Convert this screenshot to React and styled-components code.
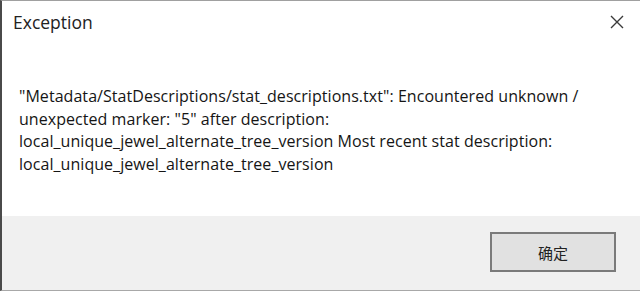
import React from "react";
import styled, { createGlobalStyle } from "styled-components";

const GlobalStyle = createGlobalStyle`
  html, body {
    margin: 0;
    padding: 0;
    background: #ffffff;
  }
`;

// janela do diálogo
const Dialog = styled.div`
  width: 640px;
  height: 291px;
  box-sizing: border-box;
  display: flex;
  flex-direction: column;
  background: #fff;
  border-top: 1px solid #a0a0a0;
  border-left: 2px solid #4a4a4a;
  border-bottom: 1px solid #a8a8a8;
  font-family: "Open Sans", "Noto Sans CJK SC", sans-serif;
  color: #1a1a1a;
`;

const TitleBar = styled.div`
  height: 41px;
  display: flex;
  align-items: center;
  justify-content: space-between;
  padding-left: 11px;
`;

const Title = styled.span`
  font-size: 17.5px;
  color: #222;
`;

const CloseButton = styled.div`
  width: 46px;
  height: 41px;
  display: flex;
  align-items: center;
  justify-content: center;
  color: #333;
`;

const Body = styled.div`
  flex: 1;
  padding: 43px 20px 0 17px;
`;

const Message = styled.p`
  margin: 0;
  font-size: 16px;
  line-height: 22.5px;
  color: #151515;
  white-space: nowrap;
  letter-spacing: 0.05px;
`;

const Footer = styled.div`
  height: 74px;
  background: #f0f0f0;
  display: flex;
  justify-content: flex-end;
  align-items: flex-start;
  padding: 16px 24px 0 0;
  box-sizing: border-box;
`;

const Button = styled.button`
  width: 126px;
  height: 40px;
  box-sizing: border-box;
  border: 2px solid #7a7a7a;
  background: #e1e1e1;
  font-family: "Noto Sans CJK SC", sans-serif;
  font-size: 15px;
  color: #222;
  padding: 0;
`;

export default function App() {
  return (
    <>
      <GlobalStyle />
      <Dialog>
        <TitleBar>
          <Title>Exception</Title>
          <CloseButton>
            <svg width="14" height="14" viewBox="0 0 14 14">
              <path d="M1 1 L13 13 M13 1 L1 13" stroke="#3a3a3a" strokeWidth="1.4" fill="none" />
            </svg>
          </CloseButton>
        </TitleBar>
        <Body>
          <Message>
            "Metadata/StatDescriptions/stat_descriptions.txt": Encountered unknown /
            <br />
            unexpected marker: "5" after description:
            <br />
            local_unique_jewel_alternate_tree_version Most recent stat description:
            <br />
            local_unique_jewel_alternate_tree_version
          </Message>
        </Body>
        <Footer>
          <Button>确定</Button>
        </Footer>
      </Dialog>
    </>
  );
}
